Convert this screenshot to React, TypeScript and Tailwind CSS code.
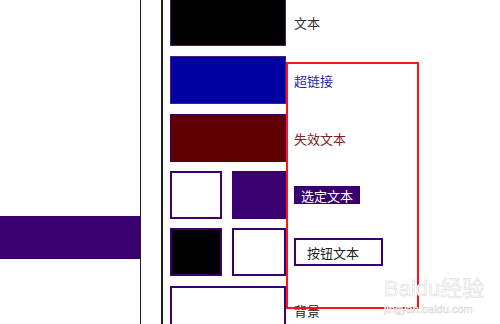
import React from 'react';

const font = { fontFamily: '"Noto Sans CJK SC", "Noto Sans", sans-serif' };

function Row({
    swatch,
    children,
    className = '',
}: {
    swatch: React.ReactNode;
    children?: React.ReactNode;
    className?: string;
}) {
    return (
        <div className={`flex h-[48px] shrink-0 items-center ${className}`}>
            <div className="flex w-[116px] shrink-0 gap-[10px] self-stretch">{swatch}</div>
            <div className="ml-[8px] text-[13px] leading-none">{children}</div>
        </div>
    );
}

export default function App() {
    return (
        <div
            className="relative flex h-[324px] w-[500px] overflow-hidden bg-white"
            style={font}
        >
            {/* left pane */}
            <div className="flex w-[140px] shrink-0 flex-col">
                <div className="h-[216px] shrink-0" />
                <div className="h-[43px] shrink-0 bg-[#3b006f]" />
            </div>
            <div className="w-px shrink-0 bg-[#1f1f1f]" />
            <div className="w-[20px] shrink-0" />
            <div className="w-[2px] shrink-0 bg-[#1f1f1f]" />

            {/* swatches */}
            <div className="flex flex-col pl-[7px]">
                <Row
                    className="-mt-[2px]"
                    swatch={<div className="flex-1 border border-[#4a1a80] bg-black" />}
                >
                    <span className="text-[#333]">文本</span>
                </Row>
                <Row
                    className="mt-[10px]"
                    swatch={<div className="flex-1 border border-[#4a1a80] bg-[#0000a0]" />}
                >
                    <span className="text-[#1f1fb0]">超链接</span>
                </Row>
                <Row
                    className="mt-[10px]"
                    swatch={<div className="flex-1 border border-[#3b006f] bg-[#600000]" />}
                >
                    <span className="text-[#7a2424]">失效文本</span>
                </Row>
                <Row
                    className="mt-[9px]"
                    swatch={
                        <>
                            <div className="w-[52px] border-2 border-[#3b006f] bg-white" />
                            <div className="w-[54px] bg-[#3b006f]" />
                        </>
                    }
                >
                    <span className="inline-block bg-[#3b006f] px-[7px] py-[2.5px] text-white">
                        选定文本
                    </span>
                </Row>
                <Row
                    className="mt-[9px]"
                    swatch={
                        <>
                            <div className="w-[52px] border-2 border-[#3b006f] bg-black" />
                            <div className="w-[54px] border-2 border-[#3b006f] bg-white" />
                        </>
                    }
                >
                    <div className="flex h-[28px] w-[89px] items-center border-2 border-[#3b006f] pl-[11px] text-[#222]">
                        按钮文本
                    </div>
                </Row>
                <Row
                    className="mt-[10px]"
                    swatch={<div className="flex-1 border-2 border-[#3b006f] bg-white" />}
                >
                    <span className="text-[#222]">背景</span>
                </Row>
            </div>

            {/* annotation box */}
            <div className="absolute left-[286px] top-[62px] h-[247px] w-[133px] border-2 border-[#ff1414]" />

            {/* watermark */}
            <div
                className="absolute left-[384px] top-[278px] flex flex-col items-start text-[#fafafa]"
                style={{ fontFamily: '"Liberation Sans", "Noto Sans CJK SC", sans-serif', WebkitTextStroke: '0.5px #dadada' }}
            >
                <span className="text-[22px] leading-none">Baidu经验</span>
                <span className="mt-[4px] text-[11px] leading-none">jingyan.baidu.com</span>
            </div>
        </div>
    );
}
